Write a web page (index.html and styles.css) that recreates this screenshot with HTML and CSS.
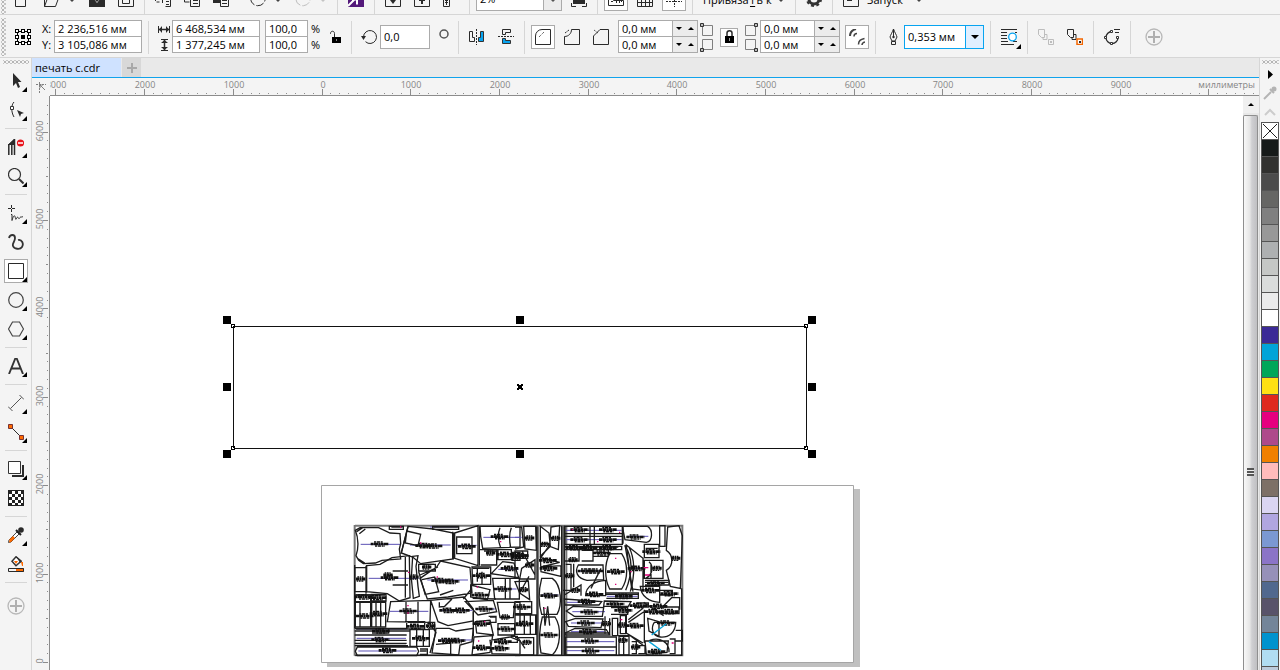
FILE: index.html
```html
<!DOCTYPE html>
<html lang="ru">
<head>
<meta charset="utf-8">
<title>печать с.cdr</title>
<link rel="stylesheet" href="styles.css">
</head>
<body>
<div class="app">
  <header class="bar standard">
    <div class="row">
      <span class="grip"></span>
      <button class="tool" aria-label="Создать"><svg viewBox="0 0 16 16"><path class="k" d="M.5 .5h10v15h-10z"/></svg></button>
      <div class="pair">
        <button class="tool" aria-label="Открыть"><svg viewBox="0 0 16 16"><path class="k" d="M.5 2.5v13h11l4-11h-11l-4 11"/></svg></button>
        <button class="caret" aria-label="Недавние"></button>
      </div>
      <button class="tool" aria-label="Сохранить"><svg viewBox="0 0 16 16"><path class="f" d="M0 0h16v16H0z"/><path fill="#f4f4f4" d="M5 8h6l-3 4z"/><path class="f" d="M6 8h4v1l-2 2-2-2z"/></svg></button>
      <button class="tool" aria-label="Печать"><svg viewBox="0 0 16 16"><path class="k" d="M.5 5.5h15v10H.5zM4.500 7.500h7v5h-7z"/></svg></button>
      <span class="sep"></span>
      <button class="tool" aria-label="Вырезать"><svg viewBox="0 0 16 16"><path class="k" stroke-dasharray="3 2" d="M.5 2v9h5"/><path class="k" d="M9.500 7.500h6v8h-5M11 10.500h3M11 13.500h3M7.500 9v3"/></svg></button>
      <button class="tool" aria-label="Копировать"><svg viewBox="0 0 16 16"><path class="k" d="M.5 2v9h5M6.500 6v9.500h9V6M9 9.500h5M9 12.500h5"/></svg></button>
      <button class="tool" aria-label="Вставить"><svg viewBox="0 0 16 16"><path class="f" d="M0 0h10v6H7v6H0z"/><path class="k" d="M7.500 6v9.500h8V6M9 9.500h5M9 12.500h5"/></svg></button>
      <span class="sep blank"></span>
      <div class="pair">
        <button class="tool" aria-label="Отменить"><svg viewBox="0 0 16 16"><path class="k" stroke-dasharray="8 2" d="M.8 7a7.200 7.200 0 0 0 14.400 1"/></svg></button>
        <button class="caret" aria-label="Список отмены"></button>
      </div>
      <div class="pair off">
        <button class="tool" aria-label="Повторить"><svg viewBox="0 0 16 16"><path class="k" stroke-dasharray="8 2" d="M.8 8a7.200 7.200 0 0 0 14.400-1"/></svg></button>
        <button class="caret" aria-label="Список повтора"></button>
      </div>
      <span class="sep"></span>
      <button class="tool" aria-label="Поиск содержимого"><svg viewBox="0 0 16 16"><path fill="#54197b" d="M0 0h16v16H0z"/><path d="M0 15l8-8M4 8.500h5v5" stroke="#fff" stroke-width="2" fill="none"/></svg></button>
      <span class="sep"></span>
      <button class="tool" aria-label="Импорт"><svg viewBox="0 0 16 16"><path class="k" d="M.5 3v12.500h15V3"/><path class="f" d="M5 9h6l-3 4zM7 3h2v7H7z"/></svg></button>
      <button class="tool" aria-label="Экспорт"><svg viewBox="0 0 16 16"><path class="k" d="M.5 3v12.500h15V3M5 9.500h6"/><path class="f" d="M7 3h2v10H7z"/></svg></button>
      <button class="tool" aria-label="Опубликовать в PDF"><svg viewBox="0 0 16 16"><path class="k" d="M.5 7.500h6v8h-6zM2 11.500h3M3.500 9v5M2 9.500h3"/></svg></button>
      <span class="sep"></span>
      <div class="combo zoom"><input aria-label="Масштаб" value="2%"><button class="drop" aria-label="Уровни масштаба"></button></div>
      <button class="tool" aria-label="Во весь экран"><svg viewBox="0 0 16 16"><path class="f" d="M2 2h12v11H2z"/><path class="k" d="M.5 12v3.500H5M11 15.500h4.500V12"/></svg></button>
      <span class="sep"></span>
      <button class="tool on" aria-label="Линейки"><svg viewBox="0 0 16 16"><path class="k" d="M.5 0v14.500h15v-5h-10V0M8.500 9v3M11.500 9v3M13.500 9v2M3 7.500h2M3 10.500h2"/></svg></button>
      <button class="tool" aria-label="Сетка"><svg viewBox="0 0 16 16"><path class="k" d="M.5 0v15.500h15V0M0 3.500h16M0 7.500h16M0 11.500h16M4.500 0v16M8.500 0v16M12.500 0v16"/></svg></button>
      <button class="tool on" aria-label="Направляющие"><svg viewBox="0 0 16 16"><path class="k" stroke-dasharray="2 1" d="M0 10.500h16M8.500 0v16"/></svg></button>
      <span class="sep"></span>
      <button class="menu snap">Привяза<u>т</u>ь к <i class="caret"></i></button>
      <span class="sep"></span>
      <button class="tool" aria-label="Параметры"><svg viewBox="0 0 16 16"><circle cx="8" cy="8" r="5" fill="none" stroke="#333" stroke-width="3"/><circle cx="8" cy="8" r="7" fill="none" stroke="#333" stroke-width="2" stroke-dasharray="3 2.500"/></svg></button>
      <span class="sep"></span>
      <button class="menu"><svg viewBox="0 0 16 16"><path class="k" d="M.5 2v13.500h15V2M4 9.500h5"/></svg>Запуск <i class="caret"></i></button>
    </div>
  </header>

  <section class="bar props">
    <span class="grip"></span>
    <button class="tool" aria-label="Исходная точка объекта"><svg viewBox="0 0 16 16" shape-rendering="crispEdges"><path fill="none" stroke="#000" d="M2.500 2.500h11v11h-11z"/><path fill="#fff" stroke="#000" d="M.5.5h3v3h-3zM6.500.5h3v3h-3zM12.500.5h3v3h-3zM.5 6.500h3v3h-3zM12.500 6.500h3v3h-3zM.5 12.500h3v3h-3zM6.500 12.500h3v3h-3zM12.500 12.500h3v3h-3z"/><path d="M6 6h4v4H6z"/></svg></button>
    <div class="pair">
      <div class="names"><label for="px">X:</label><label for="py">Y:</label></div>
      <div class="stack wide"><input id="px" value="2 236,516 мм"><input id="py" value="3 105,086 мм"></div>
    </div>
    <span class="sep"></span>
    <div class="pair">
      <div class="names marks">
        <svg viewBox="0 0 14 14"><path class="k" d="M1.500 4v7M12.500 4v7"/><path class="k" stroke-width="1.500" d="M2 7.500h10"/><path class="f" d="M5 4v7L2 7.500zM9 4v7l3-3.500z"/></svg>
        <svg viewBox="0 0 14 14"><path class="k" d="M4 1.500h7M4 12.500h7"/><path class="k" stroke-width="1.500" d="M7.500 2v10"/><path class="f" d="M4 5h7L7.500 2zM4 9h7l-3.500 3z"/></svg>
      </div>
      <div class="stack wide"><input aria-label="Ширина" value="6 468,534 мм"><input aria-label="Высота" value="1 377,245 мм"></div>
    </div>
    <div class="pair">
      <div class="stack scale"><input id="sx" value="100,0"><input id="sy" value="100,0"></div>
      <div class="names pct"><label for="sx">%</label><label for="sy">%</label></div>
      <button class="tool lock" aria-label="Сохранять пропорции"><svg viewBox="0 0 16 16"><path class="k" d="M3.500 5V4.500c0-3 4-3 4 0V8"/><path fill="#000" d="M5 8h9v6H5z"/><path fill="#888" d="M9 10h1v2H9z"/></svg></button>
    </div>
    <span class="sep"></span>
    <div class="pair">
      <svg class="hint" viewBox="0 0 16 16"><path class="k" d="M2.500 8a6.500 6.500 0 1 1 2 4.700"/><path class="f" d="M0 7h5l-2.500 4z"/></svg>
      <input class="field angle" aria-label="Угол поворота" value="0,0">
    </div>
    <svg class="degree" viewBox="0 0 17 24"><circle cx="9" cy="9" r="4" fill="none" stroke="#555" stroke-width="1.500"/></svg>
    <span class="sep"></span>
    <button class="tool" aria-label="Отразить по горизонтали"><svg viewBox="0 0 16 16"><path class="k" d="M.5 2.500h3v6h2v4h-5z"/><path class="k" stroke-dasharray="2 1" d="M7.500 0v16"/><path fill="#08a4f0" stroke="#333" d="M14.500 2.500h-3v6h-2v4h5z"/></svg></button>
    <button class="tool" aria-label="Отразить по вертикали"><svg viewBox="0 0 16 16"><path class="k" d="M4.500 5.500v-5h8v3h-5v2z"/><path class="k" stroke-dasharray="2 1" d="M0 7.500h16"/><path fill="#08a4f0" stroke="#333" d="M4.500 9.500v5h8v-3h-5v-2z"/></svg></button>
    <span class="sep"></span>
    <button class="tool on" aria-label="Скругленный угол"><svg viewBox="0 0 16 16"><path class="k" d="M.5 15.500V7A6.500 6.500 0 0 1 7 .5h8.500v15z"/><path class="k" stroke-dasharray="1 1" d="M4 8l5-5"/></svg></button>
    <button class="tool" aria-label="Выемчатый угол"><svg viewBox="0 0 16 16"><path class="k" d="M.5 15.500V7.500c4 0 7-3 7-7h8v15z"/><path class="k" stroke-dasharray="2 1" d="M1 4l4-3"/></svg></button>
    <button class="tool" aria-label="Угол с фаской"><svg viewBox="0 0 16 16"><path class="k" d="M.5 15.500V7L7 .5h8.500v15z"/><path class="k" stroke-dasharray="1 1" d="M1 1l4 3"/></svg></button>
    <div class="pair">
      <div class="stack spin"><input aria-label="Радиус верхнего левого угла" value="0,0 мм"><button class="dn" aria-label="Меньше"></button><button class="up" aria-label="Больше"></button><input aria-label="Радиус нижнего левого угла" value="0,0 мм"><button class="dn" aria-label="Меньше"></button><button class="up" aria-label="Больше"></button></div>
      <svg class="corners" viewBox="0 0 17 32"><path class="g" d="M4.500 4.500h10v10h-10zM4.500 18.500h10v10h-10z"/><path class="d" d="M2.500 2.500h3v3h-3zM2.500 27.500h3v3h-3z"/></svg>
    </div>
    <button class="tool small on" aria-label="Изменять углы вместе"><svg viewBox="0 0 16 16"><path class="k" stroke-width="1.500" d="M6 8V4c0-3 5-3 5 0v4"/><path fill="#000" d="M4 7h9v7H4z"/><path fill="#999" d="M8 9h1v3H8z"/></svg></button>
    <div class="pair">
      <svg class="corners" viewBox="0 0 17 32"><path class="g" d="M2.500 4.500h10v10h-10zM2.500 18.500h10v10h-10z"/><path class="d" d="M11.500 2.500h3v3h-3zM11.500 27.500h3v3h-3z"/></svg>
      <div class="stack spin"><input aria-label="Радиус верхнего правого угла" value="0,0 мм"><button class="dn" aria-label="Меньше"></button><button class="up" aria-label="Больше"></button><input aria-label="Радиус нижнего правого угла" value="0,0 мм"><button class="dn" aria-label="Меньше"></button><button class="up" aria-label="Больше"></button></div>
    </div>
    <button class="tool on" aria-label="Относительный масштаб углов"><svg viewBox="0 0 16 16"><path fill="none" stroke="#444" stroke-width="2" d="M1 7c0-4 2-6 6-7"/><path fill="none" stroke="#444" stroke-width="1.500" d="M5 7.500c0-2 1-3 3-3M9.500 15.500c0-4 2-5 6-6M13 16c0-2 1-2.500 3-3"/></svg></button>
    <span class="sep"></span>
    <div class="pair">
      <svg class="hint" viewBox="0 0 16 16"><path class="k" d="M8.500 0C7 4 5.500 6 5 8l2 4h3l2-4C11.500 6 10 4 8.500 0zM8.500 0v8M6.500 12.500h4v3h-4z"/><circle class="f" cx="8.500" cy="8" r="1.200"/></svg>
      <div class="combo width"><input aria-label="Толщина абриса" value="0,353 мм"><button class="drop" aria-label="Список толщин"></button></div>
    </div>
    <span class="sep"></span>
    <button class="tool fly" aria-label="Обтекание текстом"><svg class="wrap" viewBox="0 0 16 16"><path class="k" d="M0 .5h16M0 3.500h6M0 6.500h6M0 9.500h6M0 12.500h7M0 15.500h13M14 3.500h2M12 12.500h4"/><circle cx="11.500" cy="8" r="3.800" fill="#fff" stroke="#08a4f0" stroke-width="1.300"/></svg></button>
    <span class="sep"></span>
    <button class="tool off" aria-label="На передний план"><svg viewBox="0 0 16 16"><path class="k" d="M.5.5h6v8h-3l-3-3zM7 5.500h2v5H5v-2M10.500 10.500h5v5h-5z"/><path class="f" d="M12 12h2v2h-2z"/></svg></button>
    <button class="tool" aria-label="На задний план"><svg viewBox="0 0 16 16"><path class="k" d="M.5.5h6v8h-3l-3-3zM7 5.500h2v5H5v-2"/><path fill="#fff" stroke="#f26500" stroke-width="1.500" d="M10 10h5.500v5.500H10z"/><path class="f" d="M12 12h2v2h-2z"/></svg></button>
    <span class="sep"></span>
    <button class="tool" aria-label="Преобразовать в кривую"><svg viewBox="0 0 16 16"><path class="k" stroke-width="1.300" d="M8 2.500a6 6 0 1 0 6 6"/><path class="k" d="M10 .5h6M11 3.500h4"/><path fill="#fff" stroke="#333" d="M6.500 1.500h2v2h-2zM.5 7.500h2v2h-2zM6.500 13.500h2v2h-2zM12.500 7.500h2v2h-2z"/></svg></button>
    <span class="sep"></span>
    <button class="tool more" aria-label="Настроить панель"><svg viewBox="0 0 18 18"><circle cx="9" cy="9" r="8" fill="none" stroke="#b8b8b8" stroke-width="1.300"/><path stroke="#b0b0b0" stroke-width="2" d="M9 3v12M3 9h12"/></svg></button>
  </section>

  <main class="work">
    <nav class="toolbox" aria-label="Набор инструментов">
      <span class="grip flat"></span>
      <button class="tool fly" aria-label="Выбор"><svg viewBox="0 0 16 16"><path class="f" d="M5 0v13l3-3 2 5 2-1-2-5h3.500z"/></svg></button>
      <button class="tool fly" aria-label="Форма"><svg viewBox="0 0 16 16"><path class="k" d="M6 0C3 3 3 10 6 15"/><path fill="#fff" stroke="#333" d="M2.500 4.500h3v3h-3z"/><path class="f" d="M9 8l7 3-3 1-1 3z"/></svg></button>
      <span class="sep"></span>
      <button class="tool fly" aria-label="Обрезка"><svg viewBox="0 0 16 16"><path class="f" d="M0 6l6-6v6H0z"/><path class="k" stroke-width="1.500" d="M.8 5v11M3.800 5v11M6.500 0v16"/><path class="k" d="M0 6l7-6"/><circle cx="12.500" cy="4" r="3.600" fill="#e8131b"/><path stroke="#fff" stroke-width="1.500" d="M10 4h5"/></svg></button>
      <button class="tool fly" aria-label="Масштаб"><svg viewBox="0 0 16 16"><circle cx="6.500" cy="6.500" r="6" fill="none" stroke="#333" stroke-width="1.200"/><path stroke="#333" stroke-width="2" d="M11 11l4.500 4.500"/></svg></button>
      <span class="sep"></span>
      <button class="tool fly" aria-label="Свободная форма"><svg viewBox="0 0 16 16"><path class="k" d="M0 3.500h3M4 3.500h3M3.500 0v3M3.500 4v3M3 9.500h1v6c2-7 3-5 3.500-2s1.500-3 2.500-1 1.500 1 2 0 2 0 3-1"/></svg></button>
      <button class="tool" aria-label="Художественное оформление"><svg viewBox="0 0 16 16"><path fill="none" stroke="#333" stroke-width="1.800" d="M1 4C2 0 7 0 7 4s-3 5-2 8 7 4 9 1 0-8-4-7"/></svg></button>
      <button class="tool on fly" aria-label="Прямоугольник"><svg viewBox="0 0 16 16"><path class="k" d="M.5.5h15v15H.5z"/></svg></button>
      <button class="tool fly" aria-label="Эллипс"><svg viewBox="0 0 16 16"><circle cx="8" cy="8" r="7.300" fill="none" stroke="#444" stroke-width="1.200"/></svg></button>
      <button class="tool fly" aria-label="Многоугольник"><svg viewBox="0 0 16 16"><path fill="none" stroke="#444" stroke-width="1.200" d="M4.500 1h7l4 7-4 7h-7l-4-7z"/></svg></button>
      <span class="sep"></span>
      <button class="tool fly" aria-label="Текст"><svg viewBox="0 0 16 16"><path fill="none" stroke="#333" stroke-width="1.900" d="M1 16L7.500 0h1L15 16M3.500 10.500h9"/></svg></button>
      <span class="sep"></span>
      <button class="tool fly" aria-label="Размер"><svg viewBox="0 0 16 16"><path fill="none" stroke="#555" d="M2.500 13.500l11-11M0 11.500l4.500 4.500M11.500 0l4.500 4.500"/></svg></button>
      <button class="tool fly" aria-label="Соединитель"><svg viewBox="0 0 16 16"><path class="k" d="M4 4l9 9"/><path fill="#ff6a00" stroke="#733" d="M.5.5h4v4h-4zM11.500 11.500h4v4h-4z"/></svg></button>
      <span class="sep"></span>
      <button class="tool fly" aria-label="Тень"><svg viewBox="0 0 16 16"><path class="f" d="M4 14h10V4h2v12H4z"/><path fill="#fff" stroke="#333" d="M.5.5h12v12H.5z"/></svg></button>
      <button class="tool" aria-label="Прозрачность"><svg viewBox="0 0 16 16" shape-rendering="crispEdges"><path fill="#fff" stroke="#222" d="M.5.5h15v15H.5z"/><path stroke="#222" stroke-width="3" stroke-dasharray="3 3" d="M1 2.500h14M1 8.500h14M1 14h14"/><path stroke="#222" stroke-width="3" stroke-dasharray="3 3" d="M4 5.500h11M4 11.500h11"/></svg></button>
      <span class="sep"></span>
      <button class="tool fly" aria-label="Цветовая пипетка"><svg viewBox="0 0 16 16"><path fill="#fff" stroke="#444" d="M9 5l2 2-8 8-2.500.5L1 13z"/><path fill="#ff6a00" d="M5 9l2 2-4 4-2 .5.500-3z"/><path stroke="#222" stroke-width="2" d="M8 3l5 5"/><circle class="f" cx="13" cy="3" r="2.800"/></svg></button>
      <button class="tool" aria-label="Интерактивная заливка"><svg viewBox="0 0 16 16"><path fill="#fff" stroke="#333" stroke-width="1.500" d="M8 .8l5 4.500-5 4.500-4-4.500z"/><path fill="#333" d="M8 0l6 5-2 2z"/><path fill="#ff6a00" d="M6 5h4l-2 3zM13 6h2v4h-1zM8 12h8v4H8z"/><path class="k" d="M.5 12.500h15v3H.5z"/></svg></button>
      <span class="sep"></span>
      <button class="tool more" aria-label="Настроить набор инструментов"><svg viewBox="0 0 18 18"><circle cx="9" cy="9" r="8" fill="none" stroke="#b8b8b8" stroke-width="1.300"/><path stroke="#b0b0b0" stroke-width="2" d="M9 3v12M3 9h12"/></svg></button>
    </nav>

    <section class="document">
      <div class="tabs" role="tablist">
        <button class="tab" role="tab" aria-selected="true">печать с.cdr</button>
        <button class="newtab" aria-label="Новый документ"><svg viewBox="0 0 12 12"><path stroke="#a8a8a8" stroke-width="2" d="M6 1v10M1 6h10"/></svg></button>
      </div>
      <div class="desk">
        <div class="corner"><svg viewBox="0 0 16 16"><path class="g" stroke-dasharray="2 1" d="M3 5.500h10M6.500 3v11"/><path class="g" d="M7 6l5 5M7 9V6h3"/></svg></div>
        <div class="hruler"><svg id="hr" width="2400" height="17"></svg><span class="unit">миллиметры</span></div>
        <div class="vruler"><svg id="vr" width="17" height="1600"></svg></div>
        <div class="canvas">
          <svg class="art" width="1193" height="574" viewBox="50 96 1193 574">
            <defs>
              <g id="t"><path stroke="#111" stroke-width="8" stroke-dasharray="9 1 12 1 6 1" fill="none" d="M-26 0h54"/><path stroke="#111" stroke-width="5" stroke-dasharray="6 2 10 2" fill="none" d="M-16-6h28M-13 6h30"/></g>
              <g id="s"><path stroke="#111" stroke-width="9" stroke-dasharray="10 1 6 1" fill="none" d="M-14 0h28"/><path stroke="#111" stroke-width="4" stroke-dasharray="5 2" fill="none" d="M-10-6h18M-12 6h22"/></g>
            </defs>
            <path fill="#c0c0c0" d="M327 489h533v178H327z"/>
            <path fill="#fff" stroke="#a5a5a5" d="M321.500 485.500h532v177h-532z"/>
            <g transform="translate(340 515) scale(.33333)" class="pieces">
              <path class="halo" d="M45 32H540M44 30V422M44 421H540"/>
              <path class="blue" d="M62 88H180M210 90H332M352 91H410M430 67H540M270 36H352M86 190H236M262 195H384M150 289H265M300 286H398M300 375H398M50 342H200M50 370H198M55 408H230M475 163H535M410 282H465M460 222H530"/>
              <path d="M60 38h56l34 16 30 2 2 30-4 16 4 30-56 4-20 8-36 2-14-10-8-14c8-20 8-52-2-76zM50 50l18-12M52 130l22 14M58 56l18-14M148 34h42v9h-42zM204 34l76 8 60 12v78l-98 14-24-20-34-12zM200 48l42 10-8 34-38-8zM278 34h78v9h-78zM344 54l70-22v120l-70-22zM350 66h46v50h-46zM420 34h120v62l-112 4-6-36zM480 38c-8 20-6 40 2 60M514 38c-8 20-6 40-2 60M420 104h50v46h-48M474 104h40v30h-40zM516 112h24v24h-24zM414 34v118"/>
              <path d="M44 158h34v72H44zM80 152l40-4 36-20 52-6 2 126-32 10-36-22-62-6zM78 152v84M158 168h46M158 210h46M196 126v122M218 124l16-2-6 32 6 60 4 30-18 6-6-60zM236 148h50v20h-50zM290 156l12-18 88 20 6 76-72 12-62 6-22-62zM240 180l54-24M246 194l38-8 12 44-40 8M396 156h56v52h-54zM412 160v40M426 170v40M454 176l34-36 34 4 14 44zM392 210l58 14-8 30-50-8zM458 190h80v62h-74zM496 192v60M510 192v60M370 252l24-30"/>
              <path d="M46 240h46v20H46zM94 238h44v20H94zM46 262h46v74H46zM95 262h42v74H95zM60 262v74M108 262v74M122 262v74M142 320l10-60 120-4-2 66zM198 260v60M234 260v60M272 256l100-10 28 36v36l-76 14-30-12zM298 262l0 14 16-2 22-22M300 240l40-14M376 260l84-4 10 34-56 10zM472 262h52l-4 46h-40zM527 262h13v70h-13M200 320h54v22h-54zM210 344h58v50h-58zM230 345v50M250 345v50M288 340l40 0 20 8 52-8-4 40-36 10-4 30-80-6zM288 388l44-4v34M406 320l44-4 10 44-50-6zM474 326h50v34h-50zM446 304h22v18h-22M402 366l56-4-8 50-54 8zM450 376l60-10 30 12v40l-84-2zM512 364h20v18h-20"/>
              <path d="M44 340h158M44 348h166M44 360h156M44 376h156M44 385h156M44 392h160M52 396h178l6 13-6 13H52l-6-13zM240 402h22v16h-22M96 340h50v14H96M266 322l22 30-18 62M236 170l20 70M264 322h20v20h-20M398 250l70 2M400 290v74"/>
              <path stroke-width="7" d="M46 421H540M44 150v190M242 148h40M48 240h88M204 322h48M48 342h150M48 386h150M470 108h-38M204 36l-20 76M338 50v82M154 36h34M280 36h74M240 408h20M398 160h50M450 306h18M418 34v118"/>
              <use href="#t" x="118" y="87"/><use href="#t" x="252" y="92"/><use href="#t" x="280" y="93"/><use href="#t" x="380" y="94"/><use href="#t" x="478" y="65"/><use href="#t" x="148" y="188"/><use href="#s" x="144" y="180"/><use href="#s" x="222" y="186"/><use href="#s" x="260" y="156"/><use href="#t" x="300" y="197"/><use href="#t" x="330" y="199"/><use href="#s" x="62" y="192"/><use href="#t" x="424" y="182"/><use href="#t" x="508" y="160"/><use href="#t" x="488" y="222"/><use href="#t" x="70" y="246"/><use href="#t" x="112" y="248"/><use href="#t" x="74" y="303"/><use href="#t" x="115" y="296"/><use href="#t" x="204" y="288"/><use href="#t" x="324" y="286"/><use href="#t" x="362" y="286"/><use href="#t" x="432" y="282"/><use href="#t" x="424" y="326"/><use href="#t" x="498" y="342"/><use href="#s" x="496" y="306"/><use href="#t" x="226" y="334"/><use href="#t" x="242" y="370"/><use href="#t" x="320" y="377"/><use href="#t" x="348" y="377"/><use href="#t" x="122" y="348"/><use href="#t" x="120" y="374"/><use href="#t" x="142" y="406"/><use href="#t" x="424" y="398"/><use href="#t" x="488" y="380"/><use href="#t" x="480" y="400"/><use href="#t" x="496" y="118"/><use href="#s" x="452" y="114"/><use href="#s" x="528" y="126"/><use href="#t" x="420" y="240"/><use href="#s" x="272" y="332"/>
              <path class="pink" d="M202 272h4M202 294h4M480 80h4M290 186h4M180 36h4M410 216h4M414 378h4M432 320h4M204 172h4M240 84h4"/>
            </g>
            <g transform="translate(515 515) scale(.33333)" class="pieces">
              <path class="halo" d="M0 32H502V421H0M69 32v390M144 32v390M154 32v390M502 32v390"/>
              <path class="blue" d="M0 67H20M152 46H320M152 74H320M336 64H400M156 262H236M172 290H270M168 324H262M168 350H268M156 380H298M156 407H298M276 244H368M188 168H262M350 160H384M80 240H130"/>
              <path d="M0 36h20l6 60-26 6M26 34h36l2 72-34-4zM0 108h38v22H0zM20 160l40-26v58H14zM0 136v54M0 200l40-2 4 56-30-20zM0 260h50v36H0zM0 300h62v58H0zM28 300v60M46 300v60M0 368h56v52H0M10 370l20 30M66 34v388M22 110l38 70M14 234l28-50"/>
              <path d="M76 34l26 20 4 40-30 30zM108 36l26-4-4 72-26-10zM76 128l58 14-56 14 60-4v32l-60-14zM80 190h32c28 20 30 80 14 108h-46c-12-40-10-70 0-108zM82 306h38c20 30 18 90-8 114l-34-6c-8-40-6-70 4-108zM86 276l4 56 8-58 6 58M104 90l-28 40M140 32v390"/>
              <path d="M150 34h172v54H150zM150 56h172M150 64h172M225 34v54M238 34v54M322 34h76c16 10 16 46-4 48l-64-8zM434 32h16v62h-16zM458 36l34-4 10 30-6 158-30-6-12-48c24-14 20-48 0-60zM150 94h170v10H150M150 138h42v-32M200 106h34v32h-34M236 104h44v20h-44M152 148h16v78h-24M176 146v70M190 150h74l2 44-50 2c-30-6-38-26-26-46zM284 116h36c20 30 20 76 0 106h-36c-16-30-16-76 0-106zM334 90l50 40v96l-34-4zM330 92c26 40 20 90 2 134M342 96c20 40 16 90 4 134M388 88h44v40h-44zM388 136h56v54h-56zM402 140c16 14 10 40-10 50M408 190v-40"/>
              <path d="M148 240l50-30v32M212 242c0-30 30-44 60-46v46zM228 220l30-60M148 252l112 8-8 10H150zM154 288l20-14 92 4-4 26h-84zM152 320l30-10 82 2-6 26-98-4zM150 354l30-14 94 4 10 16H152zM152 366h152v30H152zM152 396h152v24H152zM274 234h96v16h-96M268 258l80 2-8 14h-74zM376 214h58v48c-30 0-56-18-58-48zM390 196h72v14h-72M434 226h38v14h-38M440 278l30-30h24v36M434 276h58v20h-58M364 264h36v12h-36M288 278h50v20h-50"/>
              <path d="M292 310h16v52h-16zM316 302h16v54h-16zM340 322l50-34M340 314l44-34M334 300v54l50 30M340 358l46 34M388 284v100M398 310l34 10v44l-30-16zM418 322h64c0 30-20 46-46 44s-28-30-18-44zM390 378h70l-4 34-62 6zM404 376c30-10 60 4 58 36M482 346h20v32h-20M464 372h16v44h-16M312 362h30v58h-30zM326 362v58M350 380h14v36h-14M370 392h20v24h-20M386 262l60 40M270 304v52M284 310v50"/>
              <path stroke-width="8" d="M150 96h160M236 112h40M2 120h34M78 86h24M148 32v388M324 36v50M330 90l24 140M270 238h100M150 354h134M0 421h502M390 202h70M312 364h30M392 100h36M500 220v200"/>
              <use href="#t" x="192" y="44"/><use href="#t" x="278" y="44"/><use href="#t" x="192" y="74"/><use href="#t" x="278" y="74"/><use href="#t" x="360" y="66"/><use href="#s" x="44" y="69"/><use href="#s" x="90" y="88"/><use href="#s" x="122" y="70"/><use href="#t" x="14" y="122"/><use href="#s" x="44" y="150"/><use href="#t" x="98" y="136"/><use href="#t" x="100" y="160"/><use href="#t" x="102" y="242"/><use href="#t" x="102" y="360"/><use href="#s" x="26" y="224"/><use href="#t" x="20" y="276"/><use href="#t" x="28" y="326"/><use href="#s" x="36" y="382"/><use href="#t" x="178" y="98"/><use href="#t" x="220" y="98"/><use href="#t" x="278" y="98"/><use href="#t" x="260" y="114"/><use href="#s" x="174" y="134"/><use href="#s" x="164" y="182"/><use href="#t" x="214" y="168"/><use href="#t" x="238" y="168"/><use href="#t" x="302" y="170"/><use href="#t" x="364" y="160"/><use href="#t" x="408" y="110"/><use href="#s" x="426" y="160"/><use href="#s" x="482" y="130"/><use href="#t" x="238" y="238"/><use href="#s" x="182" y="226"/><use href="#t" x="326" y="244"/><use href="#t" x="214" y="260"/><use href="#t" x="222" y="291"/><use href="#t" x="212" y="324"/><use href="#t" x="218" y="350"/><use href="#t" x="224" y="378"/><use href="#t" x="226" y="408"/><use href="#t" x="300" y="267"/><use href="#t" x="324" y="286"/><use href="#t" x="370" y="272"/><use href="#t" x="406" y="226"/><use href="#t" x="422" y="204"/><use href="#t" x="462" y="236"/><use href="#t" x="464" y="290"/><use href="#t" x="430" y="274"/><use href="#t" x="360" y="332"/><use href="#s" x="322" y="330"/><use href="#t" x="452" y="324"/><use href="#t" x="424" y="410"/><use href="#s" x="324" y="376"/><use href="#s" x="274" y="326"/><use href="#s" x="362" y="396"/><use href="#t" x="416" y="290"/>
              <path class="pink" d="M300 130h4M300 208h4M246 80h4M312 52h4M390 180h14M386 158h14M316 314h6M470 384h6M170 44h4M88 280h4M346 170h4"/>
              <path class="cyan" d="M410 360l44-34M402 380l36 26"/>
            </g>
            <g shape-rendering="crispEdges">
              <path fill="none" stroke="#111" d="M233.500 326.500h573v122h-573z"/>
              <path d="M223 316h8v8h-8zM516 316h8v8h-8zM808 316h8v8h-8zM223 383h8v8h-8zM808 383h8v8h-8zM223 450h8v8h-8zM516 450h8v8h-8zM808 450h8v8h-8z"/>
              <path fill="#fff" stroke="#000" d="M231.500 324.500h3v3h-3zM804.500 324.500h3v3h-3zM231.500 446.500h3v3h-3zM804.500 446.500h3v3h-3z"/>
              <path d="M233 326h1v1h-1zM805 326h1v1h-1zM233 447h1v1h-1zM805 447h1v1h-1z"/>
              <path d="M517 384h2v1h2v-1h2v2h-1v2h1v2h-2v-1h-2v1h-2v-2h1v-2h-1z"/>
            </g>
          </svg>
        </div>
        <div class="scroll"><button class="up" aria-label="Прокрутить вверх"></button><div class="thumb"><i></i></div></div>
      </div>
    </section>

    <aside class="palette" aria-label="Цветовая палитра">
      <span class="grip flat"></span>
      <button class="pal" aria-label="Меню палитры"><svg viewBox="0 0 16 16"><path d="M6 3v9l5-4.500z"/></svg></button>
      <button class="pal" aria-label="Пипетка"><svg viewBox="0 0 16 16"><path fill="none" stroke="#b4b4b4" stroke-width="2" d="M2 14l7-7"/><path stroke="#b4b4b4" stroke-width="2" d="M8 4l4 4"/><circle cx="12" cy="4" r="2.500" fill="#b4b4b4"/></svg></button>
      <button class="pal" aria-label="Вверх"><svg viewBox="0 0 16 16"><path fill="none" stroke="#ccc" stroke-width="2" d="M3 12l5-5 5 5"/></svg></button>
      <div class="swatches" id="swatches"></div>
    </aside>
  </main>
</div>
<script src="app.js"></script>
</body>
</html>
```
FILE: styles.css
```css
* { box-sizing: border-box; }
body { margin: 0; font-family: "Open Sans", "Noto Sans", sans-serif; font-size: 11px; color: #000; background: #f4f4f4; }
button, input { font: inherit; color: inherit; margin: 0; padding: 0; border: 0; background: none; border-radius: 0; outline: 0; }
svg { display: block; flex: none; }
.app { height: 100vh; display: flex; flex-direction: column; overflow: hidden; }

.k { fill: none; stroke: #2a2a2a; }
.f { fill: #2a2a2a; }
.g { fill: none; stroke: #808080; }
.d { fill: #bbb; stroke: #333; }
.off .k { stroke: #bdbdbd; }
.off .f { fill: #bdbdbd; }

.bar { flex: none; display: flex; border-bottom: 1px solid #d6d6d6; overflow: hidden; white-space: nowrap; }
.standard { height: 15px; align-items: flex-end; }
.row { flex: none; height: 30px; display: flex; align-items: center; gap: 5px; padding-left: 1px; }
.props { height: 43px; align-items: center; gap: 5px; padding: 2px 0 0 1px; }
.grip { flex: none; width: 5px; height: 38px; background: radial-gradient(#b5b5b5 1px, transparent 1px) 0 0 / 4px 4px, radial-gradient(#c5c5c5 1px, transparent 1px) 2px 2px / 4px 4px; }
.grip.flat { width: 26px; height: 4px; }
.sep { flex: none; width: 1px; height: 33px; margin: 0 1px; background: #d6d6d6; }
.sep.blank { background: none; }
.pair { display: flex; align-items: center; flex: none; }

.tool { position: relative; flex: none; width: 24px; height: 24px; display: flex; align-items: center; justify-content: center; border: 1px solid transparent; }
.tool svg { width: 16px; height: 16px; }
.tool.on { background: #fff; border-color: #ababab; }
.tool.small { width: 18px; height: 19px; }
.tool.lock { width: 21px; }
.tool.more { width: 34px; height: 34px; }
.tool.more svg { width: 18px; height: 18px; }
.fly::after { content: ""; position: absolute; right: 0; bottom: 0; width: 5px; height: 5px; background: #000; clip-path: polygon(100% 0, 100% 100%, 0 100%); }
.props .fly::after { bottom: -1px; right: -1px; }
.caret { display: flex; width: 16px; height: 24px; align-items: center; justify-content: center; }
.caret::before { content: ""; border: 2px solid transparent; border-top-color: #444; border-bottom: 0; margin-top: 4px; }
.off .caret::before { border-top-color: #c4c4c4; }
.menu { display: flex; align-items: center; height: 24px; gap: 8px; padding-left: 4px; }
.menu.snap { gap: 0; width: 90px; justify-content: space-between; }
.menu.snap u { text-underline-offset: 2px; }
.menu svg { width: 16px; height: 16px; }

.names { display: grid; grid-template-rows: 16px 16px; width: 14px; align-items: center; padding-left: 2px; margin-bottom: 2px; }
.names.marks { width: 17px; margin-bottom: 0; }
.names.marks svg { width: 14px; height: 14px; }
.names.pct { width: 16px; padding-left: 3px; }
.stack { display: grid; grid-auto-rows: 15px; gap: 1px; background: #ababab; border: 1px solid #ababab; margin-bottom: 1px; }
.stack input { width: 100%; min-width: 0; background: #fff; padding: 0 0 1px 3px; }
.wide { width: 88px; }
.scale { width: 43px; }
.spin { width: 80px; grid-template-columns: 54px 12px 12px; column-gap: 0; }
.spin input { border-right: 1px solid #ababab; }
.spin button { display: flex; align-items: center; justify-content: center; background: #ececec; }
.dn::before, .up::before { content: ""; border: 3px solid transparent; }
.dn::before { border-top-color: #000; border-bottom: 0; }
.up::before { border-bottom-color: #000; border-top: 0; }
.hint { width: 22px; height: 16px; }
.degree { width: 17px; height: 24px; }
.corners { width: 17px; height: 32px; }
.field, .combo { height: 24px; border: 1px solid #ababab; background: #fff; }
.field { padding: 0 0 2px 3px; }
.angle { width: 50px; }
.combo { display: flex; flex: none; }
.combo input { flex: 1; min-width: 0; padding: 0 0 2px 3px; }
.drop { width: 18px; border-left: 1px solid #ababab; background: #ececec; display: flex; align-items: center; justify-content: center; }
.drop::before { content: ""; border: 4px solid transparent; border-top-color: #000; border-bottom: 0; }
.zoom { width: 86px; }
.zoom .drop::before { border-width: 2px 2px 0; border-top-color: #555; margin-top: 4px; }
.width { width: 80px; border-color: #08a4f0; }
.width .drop { border-color: #08a4f0; background: #e0efff; }

.work { flex: 1; min-height: 0; display: flex; }
.toolbox { flex: none; width: 32px; border-right: 1px solid #d6d6d6; display: flex; flex-direction: column; align-items: center; gap: 5px; padding: 2px 0 0 1px; overflow: hidden; }
.toolbox .sep { width: 22px; height: 1px; margin: 1px 0; }
.document { flex: 1; min-width: 0; display: flex; flex-direction: column; }
.tabs { flex: none; height: 20px; display: flex; gap: 1px; background: #e9e9e9; border-bottom: 1px solid #10a3ec; }
.tab { width: 89px; padding-left: 3px; text-align: left; background: #cfe2ff; }
.newtab { width: 19px; display: flex; align-items: center; justify-content: center; background: #d8d8d8; }
.newtab svg { width: 12px; height: 12px; }
.desk { flex: 1; min-height: 0; display: grid; grid-template: 18px 1fr / 18px 1fr 16px; }
.corner { padding: 1px; }
.corner svg { width: 16px; height: 16px; }
.hruler { grid-column: 2 / 4; position: relative; overflow: hidden; border-bottom: 1px solid #8c8c8c; }
.unit { position: absolute; top: 0; right: 4px; font-size: 9px; line-height: 14px; color: #858585; }
.vruler { overflow: hidden; border-right: 1px solid #8c8c8c; }
.vruler svg text, .hruler svg text { font-size: 9px; fill: #858585; text-anchor: middle; }
.canvas { overflow: hidden; background: #fff; min-width: 0; }
.pieces path { fill: none; stroke: #1c1c1c; stroke-width: 4; }
.pieces .halo { stroke: #777; stroke-width: 6; }
.pieces .blue { stroke: #5a50b4; stroke-width: 3; }
.pieces .pink { stroke: #e0007a; stroke-width: 4; }
.pieces .cyan { stroke: #08a4d8; stroke-width: 4; }
.scroll { display: flex; flex-direction: column; overflow: hidden; background: #e8e8e8; }
.scroll .up { flex: none; height: 17px; margin-bottom: 2px; background: #f0f0f0; display: flex; align-items: center; justify-content: center; }
.thumb { flex: 1; width: 15px; border: 1px solid #8f8f8f; border-bottom: 0; border-radius: 2px 2px 0 0; background: linear-gradient(90deg, #f8f8f8, #e6e6e6 45%, #cfcfd2 60%, #bfbfc2); display: flex; }
.thumb i { width: 7px; height: 8px; margin: auto auto 194px; background: repeating-linear-gradient(#555 0 2px, #eee 2px 3px); }

.palette { flex: none; width: 21px; border-left: 1px solid #d6d6d6; display: flex; flex-direction: column; align-items: center; padding-top: 2px; overflow: hidden; }
.palette .grip.flat { width: 17px; margin-bottom: 2px; }
.pal { flex: none; height: 18px; padding: 1px 0; }
.pal svg { width: 16px; height: 16px; }
.swatches { flex: none; display: grid; grid-auto-rows: 16px; gap: 1px; width: 18px; padding: 1px; margin-top: 2px; background: #555; }
.swatches .none { background: #fff; display: block; }
```
FILE: app.js
```js
const SVG = "http://www.w3.org/2000/svg";

function add(parent, name, attrs, text) {
  const el = document.createElementNS(SVG, name);
  for (const key in attrs) el.setAttribute(key, attrs[key]);
  if (text !== undefined) el.textContent = text;
  parent.appendChild(el);
}

// Horizontal ruler: zero sits 272px from the left edge of the ruler strip.
const hr = document.getElementById("hr");
for (let i = -30; i <= 230; i++) {
  const x = Math.round(271.5 + i * 8.867);
  const major = i % 10 === 0;
  add(hr, "rect", { x, y: major ? 11 : 15, width: 1, height: major ? 6 : 1, fill: "#8c8c8c" });
  if (major && i < 95) add(hr, "text", { x: x + 1, y: 10 }, Math.abs(i * 100));
}

// Vertical ruler: zero sits 566px below the top edge of the canvas.
const vr = document.getElementById("vr");
for (let i = -100; i <= 63; i++) {
  const y = Math.round(566 - i * 8.84);
  const major = i % 10 === 0;
  const w = major ? 5 : i % 5 === 0 ? 2 : 1;
  add(vr, "rect", { x: 16 - w, y, width: w, height: 1, fill: "#8c8c8c" });
  if (major) add(vr, "text", { transform: `translate(11 ${y - 1}) rotate(-90)` }, Math.abs(i * 100));
}

const colors = ["none", "#161a19", "#31312f", "#4c4c4c", "#666664", "#808080", "#989898", "#aeb0b1",
  "#c5c7c5", "#dadcdb", "#ebebeb", "#ffffff", "#3b2a96", "#00a4d8", "#00a659", "#fee114", "#df291d",
  "#e5007f", "#ae4a8b", "#f08000", "#ffbbbb", "#7d7067", "#dad5f2", "#b0a6e0", "#7b98d2", "#8b74c7",
  "#9690b9", "#51688e", "#58536a", "#738599", "#0093ce", "#b0ddf3", "#bccbdc"];
const box = document.getElementById("swatches");
for (const c of colors) {
  const b = document.createElement("button");
  if (c === "none") {
    b.className = "none";
    b.setAttribute("aria-label", "Нет цвета");
    b.innerHTML = '<svg viewBox="0 0 16 16"><path d="M1 1l14 14M15 1L1 15" stroke="#222"/></svg>';
  } else {
    b.style.background = c;
    b.setAttribute("aria-label", c);
  }
  box.appendChild(b);
}
```
